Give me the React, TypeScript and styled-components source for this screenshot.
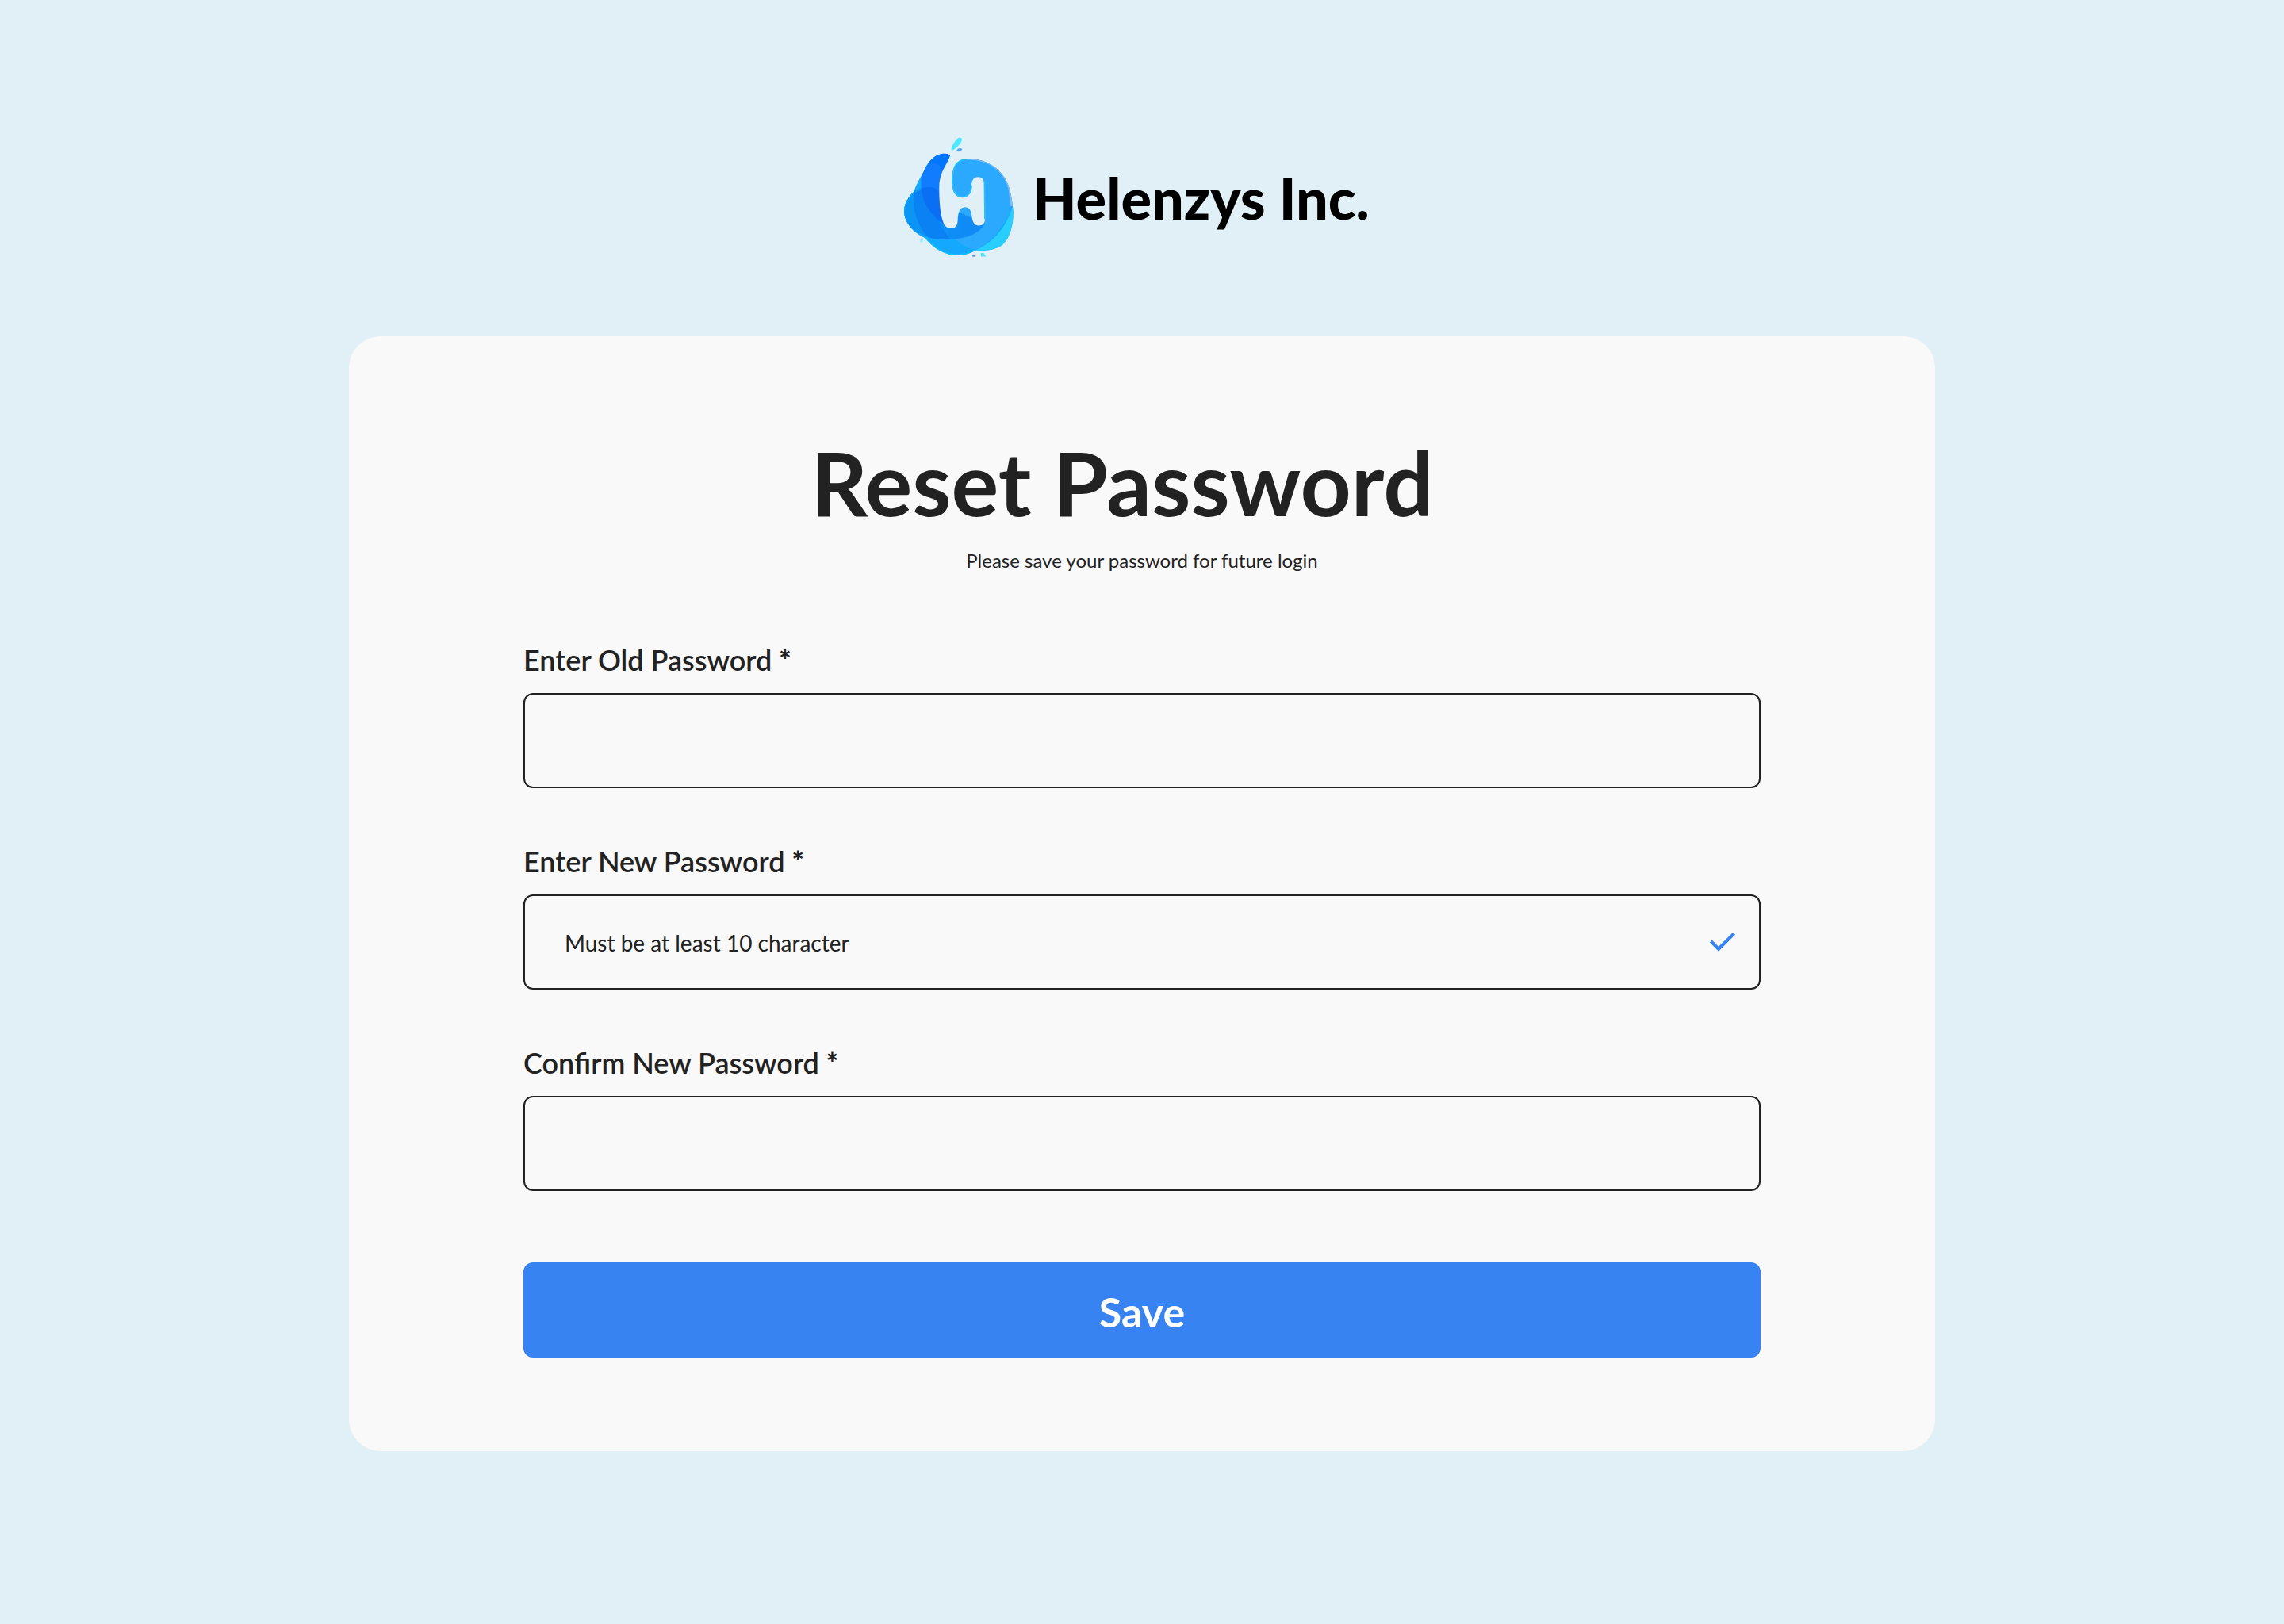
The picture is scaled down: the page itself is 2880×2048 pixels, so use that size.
import React from "react";
import styled, { createGlobalStyle } from "styled-components";

const colors = {
  page: "#e1f0f7",
  card: "#f9f9f9",
  ink: "#222222",
  primary: "#3683f1",
};

const GlobalStyle = createGlobalStyle`
  *, *::before, *::after { box-sizing: border-box; }
  body {
    margin: 0;
    background: ${colors.page};
    color: ${colors.ink};
    font-family: Lato, "Open Sans", sans-serif;
  }
`;

const Page = styled.main`
  min-height: 100vh;
  display: flex;
  flex-direction: column;
  align-items: center;
  gap: 100px;
  padding: 173px 40px 120px;
`;

const Brand = styled.header`
  display: flex;
  align-items: center;
  gap: 24px;
`;

const BrandMark = styled.svg`
  width: 138px;
  height: 151px;
  flex: none;
`;

const BrandName = styled.span`
  min-width: 438px;
  color: #000;
  font-size: 72px;
  line-height: 80px;
  font-weight: 900;
  white-space: nowrap;
`;

const Card = styled.section`
  width: 100%;
  max-width: 2000px;
  padding: 116px 220px 118px;
  border-radius: 40px;
  background: ${colors.card};
`;

const Heading = styled.div`
  display: flex;
  flex-direction: column;
  gap: 16px;
  margin-bottom: 88px;
  text-align: center;
`;

const Title = styled.h1`
  margin: 0;
  padding-right: 50px;
  font-size: 112px;
  line-height: 136px;
  font-weight: 700;
`;

const Subtitle = styled.p`
  margin: 0;
  font-size: 24px;
  line-height: 30px;
`;

const Form = styled.form`
  display: flex;
  flex-direction: column;
  gap: 90px;
`;

const Fields = styled.div`
  display: flex;
  flex-direction: column;
  gap: 70px;
`;

const Field = styled.div`
  display: flex;
  flex-direction: column;
  gap: 20px;
`;

const Label = styled.label`
  font-size: 36px;
  line-height: 44px;
  font-weight: 600;
`;

const RequiredMark = styled.span`
  font-weight: 900;
`;

const Control = styled.div`
  display: flex;
  align-items: center;
  height: 120px;
  padding-right: 30px;
  border: 2px solid ${colors.ink};
  border-radius: 12px;

  &:focus-within { border-color: ${colors.primary}; }
`;

const Input = styled.input`
  flex: 1;
  min-width: 0;
  height: 100%;
  padding: 2px 50px 0;
  border: 0;
  outline: 0;
  background: transparent;
  color: ${colors.ink};
  font: inherit;
  font-size: 28px;

  &::placeholder { color: ${colors.ink}; opacity: 1; }
`;

const CheckIcon = styled.svg`
  width: 32px;
  height: 24px;
  flex: none;
  fill: ${colors.primary};
`;

const SaveButton = styled.button`
  height: 120px;
  padding: 4px 0 0;
  border: 0;
  border-radius: 12px;
  background: ${colors.primary};
  color: #fff;
  font: inherit;
  font-size: 52px;
  font-weight: 700;
  cursor: pointer;
`;

const silhouette =
  "M233 112C232 103 216 100 200 103C168 110 146 140 134 170C118 198 104 222 97 246C74 268 60 292 60 322C62 362 92 398 138 420C166 452 204 486 262 486C292 486 314 478 332 467C362 470 396 468 424 452C458 430 474 376 473 320C470 286 466 262 458 234C444 176 388 122 306 121C268 122 246 142 241 180L200 220Z";

function Mark() {
  return (
    <BrandMark viewBox="60 40 414 452" aria-hidden="true">
      <defs>
        <clipPath id="blob">
          <path d={silhouette} />
        </clipPath>
        <linearGradient id="rim" x1="0" y1="0" x2="1" y2="0">
          <stop offset="0" stopColor="#0a97f7" />
          <stop offset="1" stopColor="#1288f5" />
        </linearGradient>
      </defs>
      <g clipPath="url(#blob)">
        <rect x="50" y="90" width="430" height="400" fill="#14a9ff" />
        <path d="M330 467C390 440 446 390 474 290L480 480L330 480Z" fill="#29cffc" />
        <path d="M241 100L480 100L466 300C448 372 396 432 332 467C284 456 238 424 210 370L236 200Z" fill="#2aa9ff" />
        <path d="M300 121C384 118 446 172 460 240L467 300" fill="none" stroke="#86b9f8" strokeWidth="9" />
        <path d="M55 290C80 240 130 222 172 229C192 232 200 250 210 300L366 366C344 404 300 424 236 426C170 426 128 412 100 392L50 350Z" fill="url(#rim)" />
        <path d="M98 250C92 310 106 370 150 418C190 430 226 426 238 426C216 406 200 376 190 350L150 229Z" fill="#0b82f3" />
        <path d="M240 95L160 105C118 160 116 240 138 280C154 314 180 346 210 366L200 200Z" fill="#127cff" />
        <path d="M240 95L170 105L152 144C176 132 200 138 206 172L236 120Z" fill="#0076ff" />
        <path d="M125 233C150 226 180 226 192 246L212 370C164 338 130 290 125 233Z" fill="#0a6ff3" />
        <path d="M138 419C166 452 204 485 262 485C292 485 314 478 332 467" fill="none" stroke="#0ebcff" strokeWidth="8" />
        <path d="M97 246C60 282 48 322 72 368C88 392 110 410 138 420" fill="none" stroke="#06a5fa" strokeWidth="7" />
      </g>
      <path
        d="M238 98C230 136 196 162 193 224C192 278 197 330 207 358C212 376 222 384 240 384C256 383 262 374 263 354C264 324 270 305 290 304C310 305 315 320 317 344C320 364 328 374 342 374C358 374 366 366 366 350L364 216C362 200 354 190 340 190C324 190 316 202 315 222C314 250 304 266 280 266C254 265 243 244 242 212C240 162 250 132 290 119L280 98Z"
        fill={colors.page}
      />
      <path
        d="M286 124C250 134 243 162 243 212C244 244 254 265 280 266C304 266 314 250 315 222M364 204L366 350"
        fill="none"
        stroke="#23c3ff"
        strokeWidth="5"
      />
      <path d="M239 88C237 76 252 52 264 43C272 38 282 44 278 54C270 70 256 84 242 90Z" fill="#4deaff" />
      <path d="M258 92C260 84 270 78 280 84C278 92 266 98 258 92Z" fill="#55a6ec" />
      <path d="M119 428L132 424L130 437L121 437Z" fill="#9beeff" />
      <path d="M318 484L331 486L330 492L319 492Z" fill="#5b93d8" />
      <path d="M350 478L360 477L370 490L352 492Z" fill="#45e2fa" />
    </BrandMark>
  );
}

type PasswordFieldProps = {
  id: string;
  label: string;
  placeholder?: string;
  valid?: boolean;
};

function PasswordField({ id, label, placeholder, valid }: PasswordFieldProps) {
  return (
    <Field>
      <Label htmlFor={id}>
        {label} <RequiredMark>*</RequiredMark>
      </Label>
      <Control>
        <Input id={id} name={id} type="password" placeholder={placeholder} required />
        {valid && (
          <CheckIcon viewBox="0 0 32 24" aria-hidden="true">
            <path d="M2.8 9.4L11 17.8L29 0L32 2.8L11 23.8L0 12.4Z" />
          </CheckIcon>
        )}
      </Control>
    </Field>
  );
}

export default function App() {
  return (
    <>
      <GlobalStyle />
      <Page>
        <Brand>
          <Mark />
          <BrandName>Helenzys Inc.</BrandName>
        </Brand>
        <Card>
          <Heading>
            <Title>Reset Password</Title>
            <Subtitle>Please save your password for future login</Subtitle>
          </Heading>
          <Form onSubmit={(event) => event.preventDefault()}>
            <Fields>
              <PasswordField id="old-password" label="Enter Old Password" />
              <PasswordField
                id="new-password"
                label="Enter New Password"
                placeholder="Must be at least 10 character"
                valid
              />
              <PasswordField id="confirm-password" label="Confirm New Password" />
            </Fields>
            <SaveButton type="submit">Save</SaveButton>
          </Form>
        </Card>
      </Page>
    </>
  );
}
